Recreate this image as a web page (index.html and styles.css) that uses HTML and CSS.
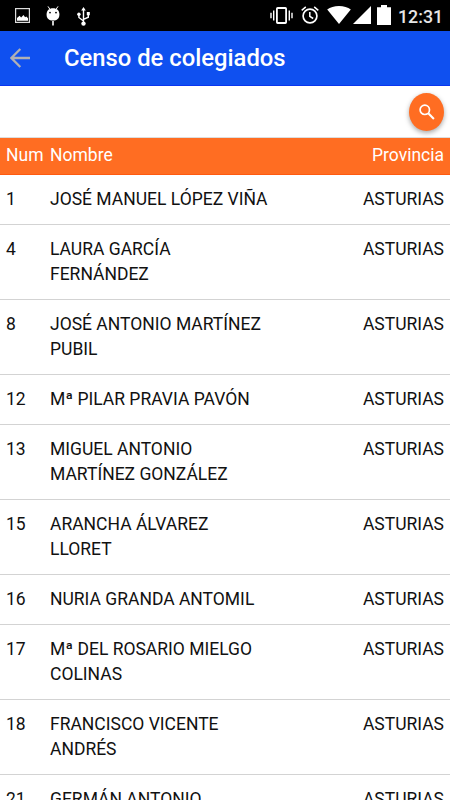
FILE: index.html
```html
<!DOCTYPE html>
<html lang="es">
<head>
    <meta charset="UTF-8">
    <meta name="viewport" content="width=device-width, initial-scale=1.0">
    <title>Censo de colegiados</title>
    <link rel="stylesheet" href="styles.css">
</head>
<body>
    <div class="status-bar">
        <svg class="icon-image" width="15" height="15" viewBox="0 0 15 15">
            <rect x="0.6" y="0.6" width="13.8" height="13.8" fill="none" stroke="#ddd" stroke-width="1.2"/>
            <path d="M2 12.7V10l2.6-2.2 1.5 1.6L8.5 7l1.6 2.3 1.2-.8 1.7 1.7v2.5z" fill="#fff"/>
        </svg>
        <svg class="icon-debug" width="14" height="20" viewBox="0 0 14 20">
            <path d="M2 .4l2 3M12 .4l-2 3" stroke="#fff" stroke-width="1"/>
            <path d="M.6 8.5C.6 4.5 3 2.3 7 2.3s6.4 2.2 6.4 6.2S11 14.6 7 14.6.6 12.5.6 8.5z" fill="#fff"/>
            <circle cx="4" cy="6.6" r=".9"/>
            <circle cx="10" cy="6.6" r=".9"/>
            <path d="M7 15v4.6" stroke="#ccc" stroke-width="2"/>
        </svg>
        <svg class="icon-usb" width="13" height="19" viewBox="0 0 13 19">
            <path d="M6.5 2v15M1.9 8v2.5L6.5 14M11.3 7v3.2L6.5 12.3" fill="none" stroke="#fff" stroke-width="1.4"/>
            <path d="M4.2 3.6L6.5 0l2.3 3.6zM9.8 5h3v3.2h-3z" fill="#fff"/>
            <circle cx="1.9" cy="7.2" r="1.7" fill="#fff"/>
            <circle cx="6.5" cy="16.6" r="2.2" fill="#fff"/>
        </svg>
        <svg class="icon-vibrate" width="23" height="17" viewBox="0 0 23 17">
            <rect x="6.9" y="1" width="9.2" height="15" rx=".8" fill="none" stroke="#fff" stroke-width="1.8"/>
            <path d="M3.7 3.5v10M1 5.8v5.4M19.3 3.5v10M22 5.8v5.4" stroke="#fff" stroke-width="1.4"/>
        </svg>
        <svg class="icon-alarm" width="18" height="18" viewBox="0 0 18 18">
            <circle cx="9" cy="10" r="6.9" fill="none" stroke="#fff" stroke-width="1.7"/>
            <path d="M.7 4.3L4.8.9M17.3 4.3L13.2.9M8.8 6v4.4l3.4 2.1" fill="none" stroke="#fff" stroke-width="1.5"/>
        </svg>
        <svg class="icon-wifi" width="24" height="18" viewBox="0 0 24 18">
            <path d="M12 18L.2 3.6C3.2 1.3 7.2 0 12 0s8.8 1.3 11.8 3.6z" fill="#fff"/>
        </svg>
        <svg class="icon-signal" width="18" height="18" viewBox="0 0 18 18">
            <path d="M0 18L18 0v18z" fill="#fff"/>
        </svg>
        <svg class="icon-battery" width="14" height="20" viewBox="0 0 14 20">
            <path d="M0 2.3h4V0h6v2.3h4V20H0z" fill="#fff"/>
        </svg>
        <span class="clock">12:31</span>
    </div>

    <header class="toolbar">
        <svg class="back" width="20" height="20" viewBox="0 0 20 20">
            <path d="M20 10H1.8M10.3 1L1.4 10l8.9 9" fill="none" stroke="#b0b0b5" stroke-width="2.3"/>
        </svg>
        <h1>Censo de colegiados</h1>
    </header>

    <div class="actions">
        <button class="search" aria-label="Buscar">
            <svg width="16" height="16" viewBox="0 0 16 16">
                <circle cx="5.8" cy="5.8" r="4.7" fill="none" stroke="#fff" stroke-width="1.7"/>
                <path d="M9.3 9.3l5.6 5.6" stroke="#fff" stroke-width="2.1"/>
            </svg>
        </button>
    </div>

    <div class="row row-header">
        <span>Num</span><span class="name">Nombre</span><span class="province">Provincia</span>
    </div>
    <div class="list">
        <div class="row"><span>1</span><span class="name">JOSÉ MANUEL LÓPEZ VIÑA</span><span class="province">ASTURIAS</span></div>
        <div class="row"><span>4</span><span class="name">LAURA GARCÍA<br>FERNÁNDEZ</span><span class="province">ASTURIAS</span></div>
        <div class="row"><span>8</span><span class="name">JOSÉ ANTONIO MARTÍNEZ<br>PUBIL</span><span class="province">ASTURIAS</span></div>
        <div class="row"><span>12</span><span class="name">Mª PILAR PRAVIA PAVÓN</span><span class="province">ASTURIAS</span></div>
        <div class="row"><span>13</span><span class="name">MIGUEL ANTONIO<br>MARTÍNEZ GONZÁLEZ</span><span class="province">ASTURIAS</span></div>
        <div class="row"><span>15</span><span class="name">ARANCHA ÁLVAREZ<br>LLORET</span><span class="province">ASTURIAS</span></div>
        <div class="row"><span>16</span><span class="name">NURIA GRANDA ANTOMIL</span><span class="province">ASTURIAS</span></div>
        <div class="row"><span>17</span><span class="name">Mª DEL ROSARIO MIELGO<br>COLINAS</span><span class="province">ASTURIAS</span></div>
        <div class="row"><span>18</span><span class="name">FRANCISCO VICENTE<br>ANDRÉS</span><span class="province">ASTURIAS</span></div>
        <div class="row"><span>21</span><span class="name">GERMÁN ANTONIO</span><span class="province">ASTURIAS</span></div>
    </div>
</body>
</html>
```
FILE: styles.css
```css
:root {
    --primary-color: #0f50f0;
    --accent-color: #ff6d22;
    --divider-color: #d3d3d3;
}
* {
    box-sizing: border-box;
}
body {
    font-family: Roboto, "Liberation Sans", sans-serif;
    margin: 0;
    height: 100vh;
    overflow: hidden;
    background-color: #fff;
    color: #111;
    display: flex;
    flex-direction: column;
}
svg {
    display: block;
    flex: none;
}
.status-bar {
    flex: none;
    display: flex;
    align-items: flex-start;
    height: 31px;
    padding: 0 8px 0 15px;
    background-color: #000;
}
.icon-image {
    margin-top: 8px;
}
.icon-debug {
    margin: 6px 0 0 16px;
}
.icon-usb {
    margin: 7px 0 0 17px;
}
.icon-vibrate {
    margin: 7px 0 0 auto;
}
.icon-alarm {
    margin: 6px 0 0 8px;
}
.icon-wifi {
    margin: 6px 0 0 8px;
}
.icon-signal {
    margin: 6px 0 0 2px;
}
.icon-battery {
    margin: 5px 0 0 6px;
}
.clock {
    width: 44px;
    margin: 5px 0 0 7px;
    color: #e6e6e6;
    font-size: 17.8px;
    font-weight: 500;
    line-height: 24px;
}
.toolbar {
    flex: none;
    display: flex;
    align-items: center;
    height: 55px;
    padding-left: 10px;
    background-color: var(--primary-color);
    border-bottom: 1px solid #0a35f0;
    color: #fff;
}
.toolbar h1 {
    margin: 0 0 0 34px;
    font-size: 23.8px;
    font-weight: 500;
}
.actions {
    flex: none;
    display: flex;
    justify-content: flex-end;
    height: 52px;
    padding: 7px 6px 0 0;
    border-bottom: 1px solid #ddd;
}
.search {
    display: flex;
    align-items: center;
    justify-content: center;
    width: 35px;
    height: 38px;
    padding: 0 0 1px;
    border: none;
    border-radius: 50%;
    background-color: var(--accent-color);
    box-shadow: 0 2px 5px rgba(0, 0, 0, 0.35);
}
.row {
    display: grid;
    grid-template-columns: 44px 1fr auto;
    padding: 12px 6px;
    border-bottom: 1px solid var(--divider-color);
    font-size: 17.5px;
    line-height: 25px;
}
.row-header {
    flex: none;
    height: 37px;
    padding-top: 5px;
    background-color: var(--accent-color);
    border-bottom-color: #ff5a10;
    color: #fff;
}
```
